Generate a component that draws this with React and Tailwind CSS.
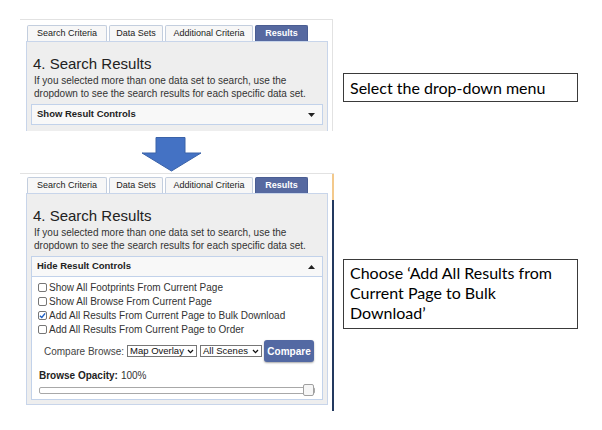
import React from "react";

const tabs = [
  { label: "Search Criteria", w: "w-[80px]" },
  { label: "Data Sets", w: "w-[54px]" },
  { label: "Additional Criteria", w: "w-[88px]" },
  { label: "Results", w: "w-[53px]", active: true }
];

const options = [
  { label: "Show All Footprints From Current Page" },
  { label: "Show All Browse From Current Page" },
  { label: "Add All Results From Current Page to Bulk Download", checked: true },
  { label: "Add All Results From Current Page to Order" }
];

function Tabs() {
  return (
    <div className="flex gap-[2px] ml-[1px] h-[16px]">
      {tabs.map((t) => (
        <div
          key={t.label}
          className={
            t.active
              ? `${t.w} flex items-center justify-center rounded-t-[2px] border border-b-0 border-[#4a5d92] bg-[#5669a0] text-[9px] font-bold text-white`
              : `${t.w} flex items-center justify-center rounded-t-[2px] border border-b-0 border-[#c3cede] bg-[#f7f7f7] text-[9px] text-[#222]`
          }
        >
          {t.label}
        </div>
      ))}
    </div>
  );
}

function Intro() {
  return (
    <>
      <div className="pt-[13px] pl-[2px] text-[15px] leading-[18px] text-[#222]">4. Search Results</div>
      <div className="mt-[2px] pl-[3px] text-[10px] leading-[12.5px] text-[#333]">
        If you selected more than one data set to search, use the
        <br />
        dropdown to see the search results for each specific data set.
      </div>
    </>
  );
}

function CheckBox({ checked }) {
  return (
    <span className="w-[9px] h-[9px] shrink-0 rounded-[2px] border border-[#767676] bg-white flex items-center justify-center">
      {checked && (
        <svg width="7" height="7" viewBox="0 0 8 8">
          <path d="M1 4.2 L3.2 6.3 L7 1.6" fill="none" stroke="#1d5fc4" strokeWidth="1.6" />
        </svg>
      )}
    </span>
  );
}

function Select({ label, w }) {
  return (
    <div className={`${w} h-[12px] border border-[#767676] bg-white flex items-center justify-between px-[2px] text-[9.5px] text-[#111]`}>
      <span>{label}</span>
      <svg width="7" height="5" viewBox="0 0 7 5">
        <path d="M1 1 L3.5 3.6 L6 1" fill="none" stroke="#111" strokeWidth="1.3" />
      </svg>
    </div>
  );
}

function Caret({ up }) {
  return (
    <svg width="7" height="4" viewBox="0 0 7 4">
      <path d={up ? "M0 4 L3.5 0 L7 4 Z" : "M0 0 L7 0 L3.5 4 Z"} fill="#222" />
    </svg>
  );
}

function Arrow() {
  return (
    <svg width="61" height="35" viewBox="0 0 61 35" className="ml-[121px] mt-[6px] block">
      <path d="M15 0.5 H44 V16 H60 L30.5 34 L1 16 H15 Z" fill="#4472c4" stroke="#3a62a8" strokeWidth="1" />
    </svg>
  );
}

function NoteBox({ children, h }) {
  return (
    <div className={`w-[235px] ${h} border border-[#3a3a3a] px-[6px] text-[16px] text-black`} style={{ fontFamily: "Lato, 'Open Sans', sans-serif" }}>
      {children}
    </div>
  );
}

export default function App() {
  return (
    <div className="w-[602px] h-[430px] bg-white pl-[20px] pt-[19px] flex flex-col" style={{ fontFamily: "'Liberation Sans', Arial, sans-serif" }}>
      <div className="flex items-start">
        <div className="flex h-[112px] border-t border-[#e2e2e2] overflow-hidden">
          <div className="w-[312px] pl-[6px] pt-[5px]">
            <Tabs />
            <div className="w-[302px] border border-[#c8d5ea] bg-[#eeeeee] px-[4px] pb-[12px]">
              <Intro />
              <div className="mt-[4px] h-[21px] border border-[#c2d2ea] bg-[#f8f8f8] flex items-center justify-between pl-[5px] pr-[7px]">
                <span className="text-[9.5px] font-bold text-[#222]">Show Result Controls</span>
                <Caret />
              </div>
            </div>
          </div>
          <div className="w-px bg-[#e2e2e2]" />
        </div>
        <div className="ml-[10px] mt-[54px]">
          <NoteBox h="h-[29px] flex items-center">Select the drop-down menu</NoteBox>
        </div>
      </div>

      <Arrow />

      <div className="flex items-start mt-[1px]">
        <div className="flex h-[238px] border-t border-[#e2e2e2]">
          <div className="w-[312px] pl-[6px] pt-[3px]">
            <Tabs />
            <div className="w-[302px] border border-[#c8d5ea] bg-[#eeeeee] px-[4px] pb-[4px]">
              <Intro />
              <div className="mt-[4px] h-[21px] border border-[#c2d2ea] bg-[#f8f8f8] flex items-center justify-between pl-[5px] pr-[7px]">
                <span className="text-[9.5px] font-bold text-[#222]">Hide Result Controls</span>
                <Caret up />
              </div>
              <div className="border border-t-0 border-[#c2d2ea] bg-white pt-[3px] pb-[3px]">
                {options.map((o) => (
                  <div key={o.label} className="h-[14px] flex items-center gap-[2px] pl-[6px] text-[10px] text-[#333]">
                    <CheckBox checked={o.checked} />
                    <span>{o.label}</span>
                  </div>
                ))}
                <div className="mt-[4px] h-[22px] flex items-center pl-[12px] text-[10px] text-[#444]">
                  <span className="mr-[3px]">Compare Browse:</span>
                  <Select label="Map Overlay" w="w-[70px]" />
                  <div className="w-[3px]" />
                  <Select label="All Scenes" w="w-[62px]" />
                  <div className="ml-[2px] w-[50px] h-[22px] rounded-[3px] bg-[#5369a3] shadow-[0_1px_2px_rgba(0,0,0,0.35)] flex items-center justify-center text-[10px] font-bold text-white">
                    Compare
                  </div>
                </div>
                <div className="mt-[7px] h-[12px] flex items-center pl-[7px] text-[10px] text-[#333]">
                  <span className="font-bold text-[#222]">Browse Opacity:</span>
                  <span className="ml-[3px]">100%</span>
                </div>
                <div className="mt-[3px] ml-[7px] w-[276px] h-[12px] flex items-center relative">
                  <div className="w-full h-[7px] rounded-[2px] border border-[#a8a8a8] bg-white" />
                  <div className="absolute right-[1px] top-0 w-[11px] h-[12px] rounded-[2px] border border-[#a0a0a0] bg-[#f6f6f6]" />
                </div>
              </div>
            </div>
          </div>
          <div className="w-[2px] flex flex-col">
            <div className="h-[26px] bg-[#f3c98c]" />
            <div className="flex-1 bg-[#23395f]" />
          </div>
        </div>
        <div className="ml-[9px] mt-[86px]">
          <NoteBox h="h-[70px] py-[3px] leading-[20px]">
            Choose ‘Add All Results from
            <br />
            Current Page to Bulk
            <br />
            Download’
          </NoteBox>
        </div>
      </div>
    </div>
  );
}
